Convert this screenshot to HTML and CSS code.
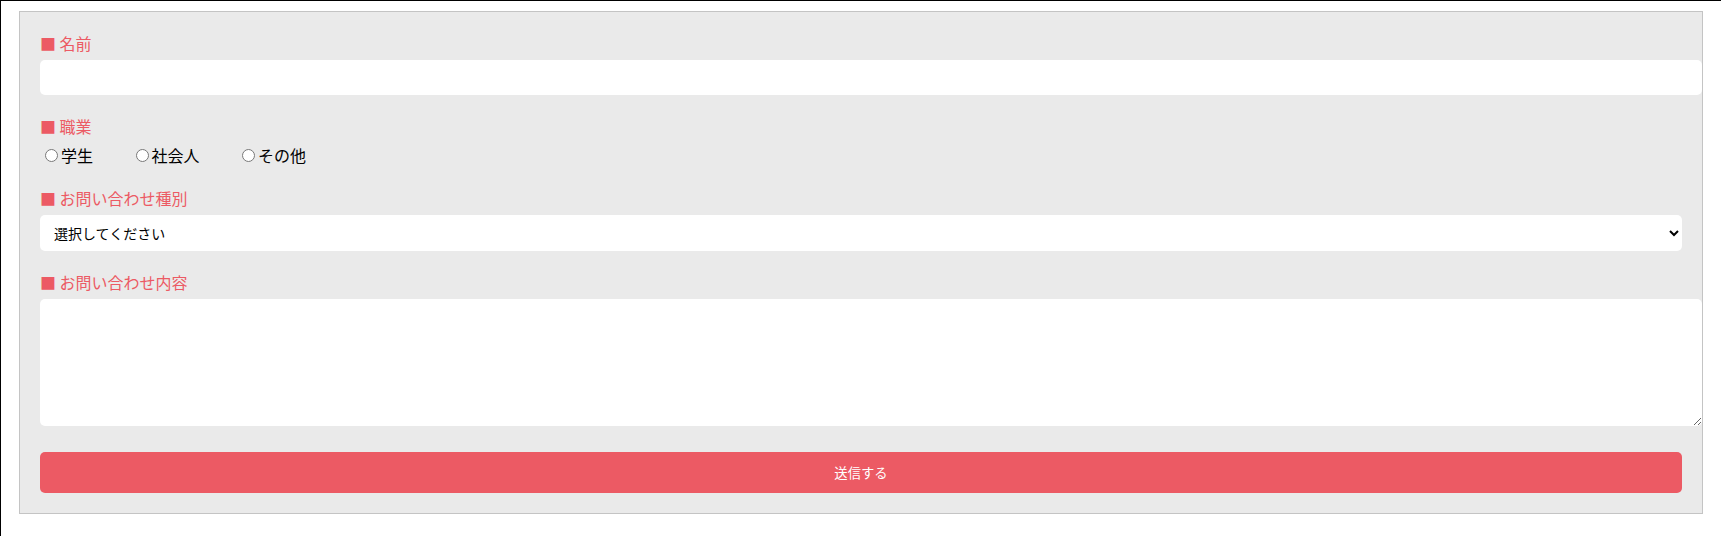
FILE: index.html
```html
<!DOCTYPE html>
<html lang="ja">
<head>
<meta charset="utf-8">
<title>お問い合わせ</title>
<link rel="stylesheet" href="styles.css">
</head>
<body>
<form class="contact">
  <div class="item">
    <label class="label" for="name">■ 名前</label>
    <input class="text" type="text" id="name">
  </div>
  <div class="item">
    <p class="label">■ 職業</p>
    <div class="radios">
      <label class="radio"><input type="radio" name="job">学生</label>
      <label class="radio"><input type="radio" name="job">社会人</label>
      <label class="radio"><input type="radio" name="job">その他</label>
    </div>
  </div>
  <div class="item">
    <label class="label" for="kind">■ お問い合わせ種別</label>
    <select class="select" id="kind">
      <option>選択してください</option>
    </select>
  </div>
  <div class="item item-last">
    <label class="label" for="body">■ お問い合わせ内容</label>
    <textarea class="area" id="body"></textarea>
  </div>
  <button class="submit" type="submit">送信する</button>
</form>
</body>
</html>
```

FILE: styles.css
```css
html {
  box-sizing: border-box;
  min-height: 100vh;
  border-top: 1px solid #000;
  border-left: 1px solid #000;
}
body {
  margin: 0 8px 8px;
  font-family: "Noto Sans CJK JP", sans-serif;
}
.contact {
  margin: 10px;
  padding: 20px;
  background: #eaeaea;
  border: 1px solid #c4c4c4;
}
.item {
  margin-bottom: 20px;
}
.item-last {
  margin-bottom: 26px;
}
.label {
  display: block;
  margin: 0 0 6px;
  font-size: 16px;
  line-height: 22px;
  color: #ec5a64;
}
.text {
  display: block;
  box-sizing: content-box;
  width: 100%;
  height: 15px;
  padding: 10px;
  border: none;
  border-radius: 5px;
  background: #fff;
  font-family: "Noto Sans CJK JP", sans-serif;
}
.radios {
  display: flex;
  height: 24px;
  align-items: center;
  font-size: 16px;
  color: #000;
}
.radio {
  display: flex;
  align-items: center;
  margin-right: 37.5px;
}
.radio input {
  margin: 0 3px 0 5px;
}
.select {
  display: block;
  width: 100%;
  height: 36px;
  padding: 0 10px;
  border: none;
  border-radius: 5px;
  background: #fff;
  color: #000;
  font-family: "Noto Sans CJK JP", sans-serif;
  font-size: 14px;
}
.area {
  display: block;
  box-sizing: content-box;
  width: 100%;
  height: 107px;
  padding: 10px;
  border: none;
  border-radius: 5px;
  background: #fff;
  font-family: "Noto Sans CJK JP", sans-serif;
}
.submit {
  display: block;
  width: 100%;
  height: 41px;
  border: none;
  border-radius: 5px;
  background: #ec5a64;
  color: #fff;
  font-family: "Noto Sans CJK JP", sans-serif;
  font-size: 13.33px;
}
```
